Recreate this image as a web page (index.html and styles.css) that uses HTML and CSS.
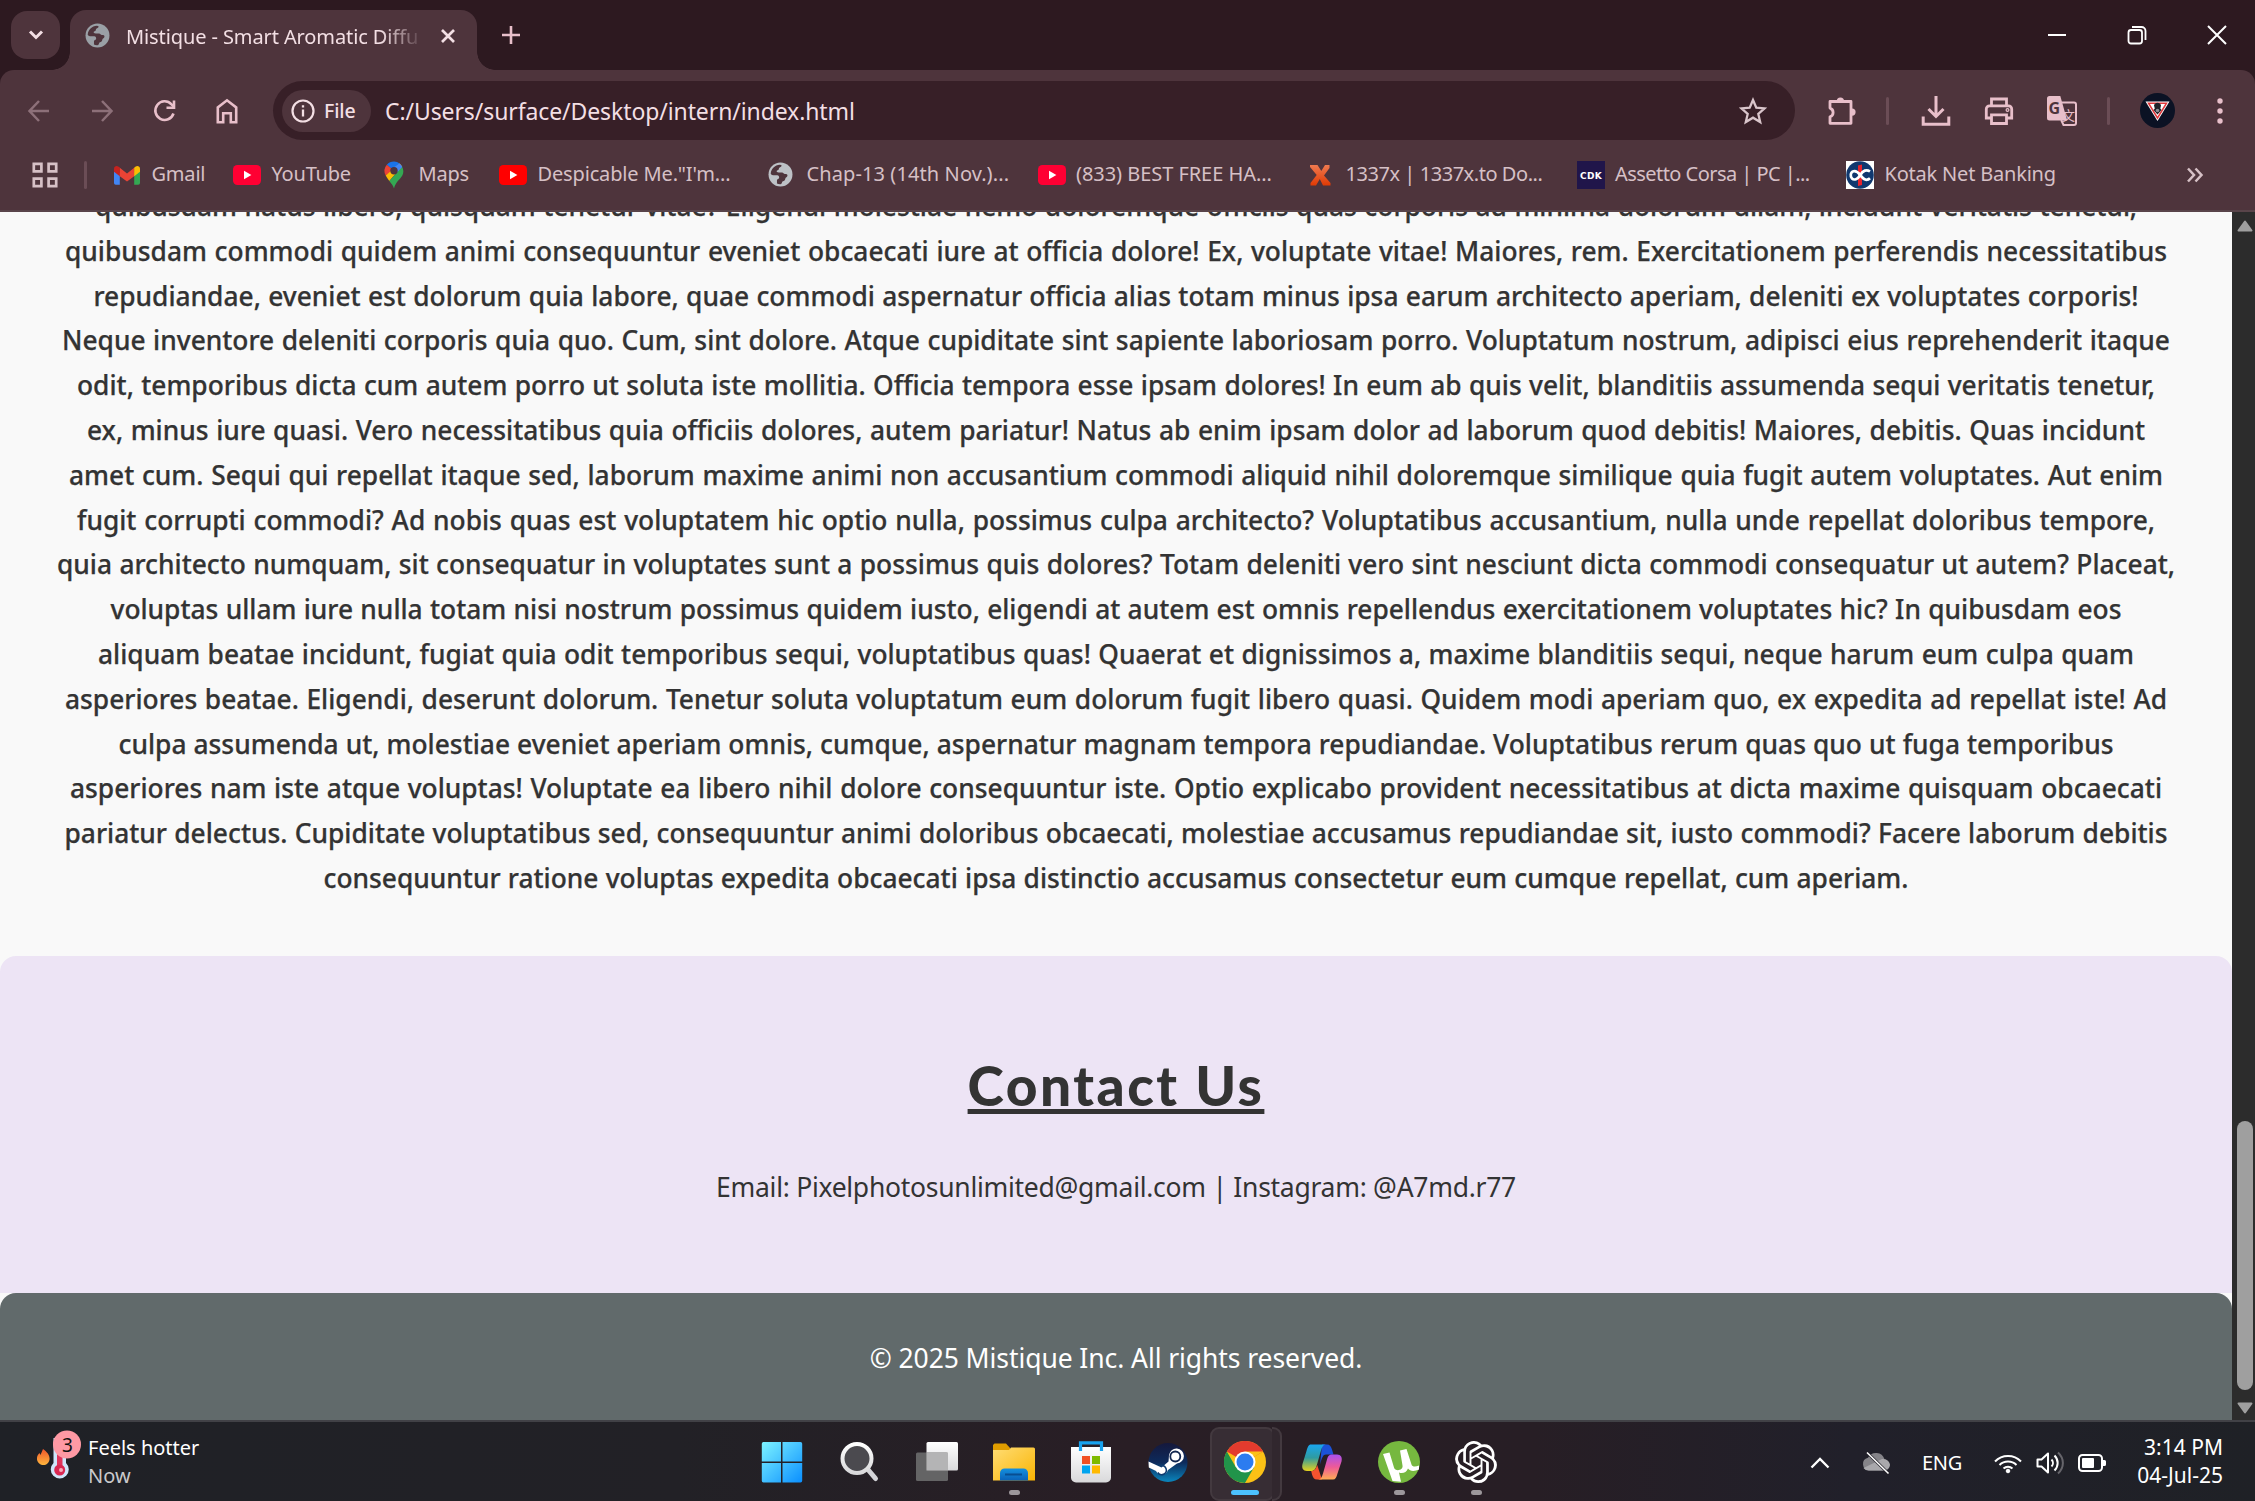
FILE: index.html
```
<!DOCTYPE html>
<html lang="en">
<head>
<meta charset="utf-8">
<title>Mistique - Smart Aromatic Diffuser</title>
<link rel="stylesheet" href="styles.css">
</head>
<body>
<svg class="defs" width="0" height="0" aria-hidden="true">
  <defs>
    <linearGradient id="win" x1="0" y1="0" x2="1" y2="1"><stop offset="0" stop-color="#7df3ff"/><stop offset="1" stop-color="#0a8fff"/></linearGradient>
    <linearGradient id="folder" x1="0" y1="0" x2="1" y2="1"><stop offset="0" stop-color="#ffdd74"/><stop offset="1" stop-color="#f9b404"/></linearGradient>
    <linearGradient id="tray" x1="0" y1="0" x2="0" y2="1"><stop offset="0" stop-color="#1490df"/><stop offset="1" stop-color="#0a62b8"/></linearGradient>
    <linearGradient id="steam" x1="0" y1="0" x2="0" y2="1"><stop offset="0" stop-color="#15183c"/><stop offset=".5" stop-color="#0d2b5c"/><stop offset="1" stop-color="#0a86bd"/></linearGradient>
    <linearGradient id="copA" x1="0" y1="0" x2="0" y2="1"><stop offset="0" stop-color="#1aa6f0"/><stop offset=".5" stop-color="#2f9ba0"/><stop offset="1" stop-color="#e6d21c"/></linearGradient>
    <linearGradient id="copB" x1="0" y1="0" x2="0" y2="1"><stop offset="0" stop-color="#a851f0"/><stop offset=".5" stop-color="#ee5a98"/><stop offset="1" stop-color="#ffac54"/></linearGradient>
    <linearGradient id="metal" x1="0" y1="0" x2="0" y2="1"><stop offset="0" stop-color="#fff"/><stop offset="1" stop-color="#d9d9db"/></linearGradient>
    <linearGradient id="flame" x1="0" y1="0" x2="0" y2="1"><stop offset="0" stop-color="#f0552b"/><stop offset="1" stop-color="#ffb63d"/></linearGradient>
    <linearGradient id="xg" x1="0" y1="0" x2="0" y2="1"><stop offset="0" stop-color="#ef7a50"/><stop offset="1" stop-color="#e03a04"/></linearGradient>
    <symbol id="globe" viewBox="0 0 24 24"><circle cx="12" cy="12" r="11.5" fill="currentColor"/><path class="cut" d="M2.6 11.2C3 6.600 6.500 3 11.400 2.700c1.500 0 2.100.8 1.300 1.700-.9.9-2.300 1-2.300 2.200 0 1.100-1.500.9-2 1.900-.4.900.5 1.500 1.900 1.500h3.200c1.300 0 1.400 1.300 2.700 1.400 1.600.1 2.500.1 2.500 1.600 0 1.800-1.900 1.700-2.100 3.100-.2 1.700-1 1.900-2.300 2.400-1.100.4-.6 2.600-2.300 2.900-1.300.1-2.400-.2-3.400-.7v-2.900c0-1.500 2.100-1.100 2.100-3.100 0-1.700-1.500-1.900-2.800-1.900-1.900 0-4.600-.1-5.300-1.600z"/></symbol>
    <symbol id="youtube" viewBox="0 0 28 20"><rect width="28" height="20" rx="4.500" fill="currentColor"/><path d="M11 5.800v8.400l7.400-4.200z" fill="#fff"/></symbol>
  </defs>
</svg>

<header class="browser">
  <div class="tabstrip">
    <button class="tab-search"><svg width="18" height="12" viewBox="0 0 18 12"><path d="M3 2.500l6 6 6-6" fill="none" stroke="#f3dfe4" stroke-width="3"/></svg></button>
    <div class="tab">
      <svg class="globe" width="25" height="25"><use href="#globe"/></svg>
      <span class="tab-title">Mistique - Smart Aromatic Diffu</span>
      <svg width="16" height="16" viewBox="0 0 16 16"><path d="M2 2l12 12M14 2L2 14" stroke="#f3dfe4" stroke-width="2.700"/></svg>
    </div>
    <svg class="new-tab" width="18" height="18" viewBox="0 0 18 18"><path d="M9 0v18M0 9h18" stroke="#e8bfca" stroke-width="2.600"/></svg>
    <div class="window-buttons">
      <svg width="20" height="20" viewBox="0 0 20 20"><path d="M1 10h18" stroke="#fff" stroke-width="2"/></svg>
      <svg width="20" height="20" viewBox="0 0 20 20" fill="none" stroke="#fff" stroke-width="1.800"><rect x="1.500" y="5" width="13.500" height="13.500" rx="2.500"/><path d="M5 2h9.500a4 4 0 0 1 4 4v9"/></svg>
      <svg width="20" height="20" viewBox="0 0 20 20"><path d="M1 1l18 18M19 1L1 19" stroke="#fff" stroke-width="2"/></svg>
    </div>
  </div>

  <div class="toolbar">
    <div class="nav">
      <svg width="24" height="24" viewBox="0 0 24 24" fill="none" stroke="#8d7079" stroke-width="2.500"><path d="M22 12H3M12 2L2.500 12l9.500 10"/></svg>
      <svg width="24" height="24" viewBox="0 0 24 24" fill="none" stroke="#8d7079" stroke-width="2.500"><path d="M2 12h19M12 2l9.500 10L12 22"/></svg>
      <svg width="24" height="24" viewBox="0 0 24 24" fill="none" stroke="#e8bfca" stroke-width="2.600"><path d="M21.500 14.500a9.300 9.300 0 1 1-2-9.200l2 2.200"/><path d="M22 1.500v7.200h-7.500"/></svg>
      <svg width="24" height="26" viewBox="0 0 24 26" fill="none" stroke="#e8bfca" stroke-width="2.600"><path d="M2.800 24.300V9.500L12 2.300l9.200 7.200v14.800h-5.400v-9H8.200v9z"/></svg>
    </div>
    <div class="omnibox">
      <div class="chip">
        <svg width="24" height="24" viewBox="0 0 24 24"><circle cx="12" cy="12" r="10.500" fill="none" stroke="#f3dfe4" stroke-width="2.200"/><path d="M12 10.500v7M12 6.200v2.400" stroke="#f3dfe4" stroke-width="2.300"/></svg>
        <span>File</span>
      </div>
      <span class="url">C:/Users/surface/Desktop/intern/index.html</span>
      <svg class="star" width="28" height="28" viewBox="0 0 28 28"><path d="M14 3l3.300 7.700 8.300.7-6.300 5.500 1.900 8.200L14 20.700l-7.200 4.400 1.900-8.200-6.300-5.500 8.300-.7z" fill="none" stroke="#d9c5cb" stroke-width="2.300"/></svg>
    </div>
    <div class="actions">
      <svg width="30" height="30" viewBox="0 0 30 30"><path d="M3 5.500h21v21.800H3v-6.500a4.600 4.600 0 0 0 0-8.700z" fill="none" stroke="#e8bfca" stroke-width="2.800" stroke-linejoin="round"/><path d="M9.800 5a3.600 3.600 0 0 1 7.200 0zM25 12.500a3.600 3.600 0 0 1 0 7.200z" fill="#e8bfca"/></svg>
      <i class="divider"></i>
      <svg width="30" height="30" viewBox="0 0 30 30" fill="none" stroke="#e8bfca" stroke-width="3"><path d="M15 0v20M7.500 13l7.500 7.500 7.500-7.500M2.200 20.500v7.700h25.600v-7.700"/></svg>
      <svg width="30" height="30" viewBox="0 0 30 30" fill="none" stroke="#e8bfca" stroke-width="2.800"><path d="M7.500 9.500V3h15v6.500M7.500 22H2.300V13a3.200 3.200 0 0 1 3.200-3.200h19A3.200 3.200 0 0 1 27.700 13v9h-5.200"/><path d="M7.500 18.800h15v8.700h-15z"/><circle cx="23.500" cy="14" r=".6"/></svg>
      <svg width="30" height="30" viewBox="0 0 30 30"><path d="M2.500 0h10.800l6.900 24.500H2.500A2.500 2.500 0 0 1 0 22V2.500A2.500 2.500 0 0 1 2.500 0z" fill="#e8bfca"/><path d="M14.500 6.500H27a2 2 0 0 1 2 2V27a2 2 0 0 1-2 2H16.500l-2.300-5" fill="none" stroke="#e8bfca" stroke-width="2"/><text x="1.500" y="17.500" class="g-letter">G</text><text x="15" y="23.500" class="han">文</text></svg>
      <i class="divider last"></i>
      <svg class="avatar" width="35" height="35" viewBox="0 0 35 35"><circle cx="17.500" cy="17.500" r="17.500" fill="#0b1224"/><path d="M5.500 8.500h24L17.500 28z" fill="#fff"/><path d="M8.500 10.200h18L17.500 25z" fill="#fff" stroke="#e0393c" stroke-width="1.500"/><path d="M14 12.500a3.600 3.600 0 0 1 7 0l-.7 3 1.200 1.500-4 4.500-4-4.500 1.300-1.500z" fill="#202227"/><circle cx="17.500" cy="17.500" r="1.800" fill="#8b8d92"/></svg>
      <svg width="6" height="26" viewBox="0 0 6 26" fill="#e8bfca"><circle cx="3" cy="3" r="2.700"/><circle cx="3" cy="13" r="2.700"/><circle cx="3" cy="23" r="2.700"/></svg>
    </div>
  </div>

  <nav class="bookmarks">
    <svg class="apps" width="26" height="26" viewBox="0 0 26 26" fill="none" stroke="#d6c0c6" stroke-width="2.700"><path d="M1.800 1.800h7.600v7.600H1.800zM16.600 1.800h7.600v7.600h-7.600zM1.800 16.600h7.600v7.600H1.800zM16.600 16.600h7.600v7.600h-7.600z"/></svg>
    <i class="divider"></i>
    <a class="bm gmail"><svg width="28" height="28" viewBox="0 0 28 28"><path d="M1 8v14a1.800 1.800 0 0 0 1.800 1.800h4V12z" fill="#4285f4"/><path d="M27 8v14a1.800 1.800 0 0 1-1.800 1.800h-4V12z" fill="#34a853"/><path d="M6.500 6.500l7.500 6 7.500-6V15L14 20.500 6.500 15z" fill="#ea4335"/><path d="M21.200 6.800l1.500-1.200C24.500 4.200 27 5.500 27 7.700v3.100l-5.800 4.400z" fill="#fbbc04"/><path d="M6.800 6.800L5.300 5.600C3.500 4.200 1 5.500 1 7.700v3.100l5.800 4.400z" fill="#c5221f"/></svg><span>Gmail</span></a>
    <a class="bm yt"><svg class="yt-a" width="28" height="20"><use href="#youtube"/></svg><span>YouTube</span></a>
    <a class="bm maps"><svg width="28" height="28" viewBox="0 0 28 28"><path d="M14 .5a9.500 9.500 0 0 0-7.200 3.300l7.200 6L19.700 2.400A9.500 9.500 0 0 0 14 .5z" fill="#1a73e8"/><path d="M6.800 3.800A9.500 9.500 0 0 0 5.700 14.500L14 9.800z" fill="#ea4335"/><path d="M5.700 14.500c1 2 2.300 3.600 3.600 5.400L22 5.500a9.500 9.500 0 0 0-2.300-3.100z" fill="#fbbc04"/><path d="M22 5.500c1.800 3.200 1.700 6.300.3 9-2.600 4.500-6.500 6-8.300 13-.6-2.700-2.500-4.900-4.700-7.600z" fill="#34a853"/><path d="M19.700 2.400A9.500 9.500 0 0 1 22.300 6L16 12.500l-4-5z" fill="#4285f4"/><circle cx="14" cy="9.700" r="3.700" fill="#4e343c"/></svg><span>Maps</span></a>
    <a class="bm desp"><svg class="yt-b" width="28" height="20"><use href="#youtube"/></svg><span>Despicable Me."I'm...</span></a>
    <a class="bm chap"><svg class="globe light" width="25" height="25"><use href="#globe"/></svg><span>Chap-13 (14th Nov.)...</span></a>
    <a class="bm best"><svg class="yt-a" width="28" height="20"><use href="#youtube"/></svg><span>(833) BEST FREE HA...</span></a>
    <a class="bm leet"><svg width="28" height="28" viewBox="0 0 28 28"><path d="M3 4h7.500l3.800 6L18 4h4.500v3L17 14.500l6.500 7.500v2.500H16L12.800 18 9 24.500H3.500V22L9.700 14 3 6z" fill="url(#xg)"/></svg><span>1337x | 1337x.to Do...</span></a>
    <a class="bm asse"><svg width="28" height="28" viewBox="0 0 28 28"><rect width="28" height="28" fill="#20154a"/><text x="14" y="18" class="cdk">CDK</text></svg><span>Assetto Corsa | PC |...</span></a>
    <a class="bm kotak"><svg width="28" height="28" viewBox="0 0 28 28"><rect width="28" height="28" fill="#fff"/><circle cx="14" cy="14" r="13.800" fill="#10386f"/><path d="M12 4.500l4-1V24l-4 1z" fill="#e8232d"/><path d="M24 10.500C20.500 8 17 9.500 14.300 14S8 19.500 6 17.500s-1.700-6.500 1.500-7.300c3-.6 5 1.500 6.800 3.900s3.500 4.700 6 4.700c1.500 0 2.700-.5 3.700-1.500" fill="none" stroke="#fff" stroke-width="2.700"/></svg><span>Kotak Net Banking</span></a>
    <svg class="more" width="18" height="16" viewBox="0 0 18 16" fill="none" stroke="#d6c0c6" stroke-width="2.500"><path d="M2 1.500L8 8l-6 6.500M9.500 1.500L15.500 8l-6 6.500"/></svg>
  </nav>
</header>

<div class="viewport">
  <main class="page">
    <div class="about">
      <span style="width:2042px">quibusdam natus libero, quisquam tenetur vitae? Eligendi molestiae nemo doloremque officiis quas corporis ad minima dolorum ullam, incidunt veritatis tenetur,</span>
      <span style="width:2102px">quibusdam commodi quidem animi consequuntur eveniet obcaecati iure at officia dolore! Ex, voluptate vitae! Maiores, rem. Exercitationem perferendis necessitatibus</span>
      <span style="width:2045px">repudiandae, eveniet est dolorum quia labore, quae commodi aspernatur officia alias totam minus ipsa earum architecto aperiam, deleniti ex voluptates corporis!</span>
      <span style="width:2108px">Neque inventore deleniti corporis quia quo. Cum, sint dolore. Atque cupiditate sint sapiente laboriosam porro. Voluptatum nostrum, adipisci eius reprehenderit itaque</span>
      <span style="width:2078px">odit, temporibus dicta cum autem porro ut soluta iste mollitia. Officia tempora esse ipsam dolores! In eum ab quis velit, blanditiis assumenda sequi veritatis tenetur,</span>
      <span style="width:2058px">ex, minus iure quasi. Vero necessitatibus quia officiis dolores, autem pariatur! Natus ab enim ipsam dolor ad laborum quod debitis! Maiores, debitis. Quas incidunt</span>
      <span style="width:2094px">amet cum. Sequi qui repellat itaque sed, laborum maxime animi non accusantium commodi aliquid nihil doloremque similique quia fugit autem voluptates. Aut enim</span>
      <span style="width:2078px">fugit corrupti commodi? Ad nobis quas est voluptatem hic optio nulla, possimus culpa architecto? Voluptatibus accusantium, nulla unde repellat doloribus tempore,</span>
      <span style="width:2118px">quia architecto numquam, sit consequatur in voluptates sunt a possimus quis dolores? Totam deleniti vero sint nesciunt dicta commodi consequatur ut autem? Placeat,</span>
      <span style="width:2011px">voluptas ullam iure nulla totam nisi nostrum possimus quidem iusto, eligendi at autem est omnis repellendus exercitationem voluptates hic? In quibusdam eos</span>
      <span style="width:2036px">aliquam beatae incidunt, fugiat quia odit temporibus sequi, voluptatibus quas! Quaerat et dignissimos a, maxime blanditiis sequi, neque harum eum culpa quam</span>
      <span style="width:2102px">asperiores beatae. Eligendi, deserunt dolorum. Tenetur soluta voluptatum eum dolorum fugit libero quasi. Quidem modi aperiam quo, ex expedita ad repellat iste! Ad</span>
      <span style="width:1995px">culpa assumenda ut, molestiae eveniet aperiam omnis, cumque, aspernatur magnam tempora repudiandae. Voluptatibus rerum quas quo ut fuga temporibus</span>
      <span style="width:2092px">asperiores nam iste atque voluptas! Voluptate ea libero nihil dolore consequuntur iste. Optio explicabo provident necessitatibus at dicta maxime quisquam obcaecati</span>
      <span style="width:2103px">pariatur delectus. Cupiditate voluptatibus sed, consequuntur animi doloribus obcaecati, molestiae accusamus repudiandae sit, iusto commodi? Facere laborum debitis</span>
      <span style="width:1585px">consequuntur ratione voluptas expedita obcaecati ipsa distinctio accusamus consectetur eum cumque repellat, cum aperiam.</span>
    </div>
    <section class="contact">
      <h2>Contact Us</h2>
      <p>Email: Pixelphotosunlimited@gmail.com | Instagram: @A7md.r77</p>
    </section>
    <footer class="footer">© 2025 Mistique Inc. All rights reserved.</footer>
  </main>
  <div class="scrollbar">
    <svg width="16" height="12" viewBox="0 0 16 12"><path d="M8 1.500L14.500 10.500H1.500z" fill="#9f9f9f" stroke="#9f9f9f" stroke-width="2" stroke-linejoin="round"/></svg>
    <div class="thumb"></div>
    <svg width="16" height="12" viewBox="0 0 16 12"><path d="M8 10.500L14.500 1.500H1.500z" fill="#9f9f9f" stroke="#9f9f9f" stroke-width="2" stroke-linejoin="round"/></svg>
  </div>
</div>

<div class="taskbar">
  <div class="weather">
    <svg width="44" height="52" viewBox="0 0 44 52"><path d="M6 19c4 3 7 6 6.500 10.500C12 33 9.500 35 6.500 35S.5 33 0 29.500c-.3-3 1-5 2.500-6.500l1 2C4.500 23 5 21 6 19z" fill="url(#flame)"/><path d="M16.500 8h12.500v25a9 9 0 1 1-12.500 0z" fill="#cfe6fb"/><path d="M20 10h5.500v26H20z" fill="#e0355c"/><circle cx="22.700" cy="40" r="5.500" fill="#d92852"/><circle cx="24" cy="40" r="2" fill="#f9a9ba"/><circle cx="30" cy="14.500" r="14" fill="#ff99a4"/><text x="30.500" y="21.500" class="badge">3</text></svg>
    <div class="weather-text"><span class="hot">Feels hotter</span><span class="now">Now</span></div>
  </div>
  <div class="apps-row">
    <div class="app start"><svg width="42" height="42" viewBox="0 0 42 42"><path d="M2.500 1H20v19.500H.8V2.700A1.700 1.700 0 0 1 2.500 1zM21.500 1h18a1.700 1.700 0 0 1 1.700 1.700v17.800H21.500zM.8 22H20v19.500H2.500a1.700 1.700 0 0 1-1.700-1.700zM21.500 22h19.700v17.800a1.700 1.700 0 0 1-1.700 1.700h-18z" fill="url(#win)"/></svg></div>
    <div class="app"><svg width="42" height="42" viewBox="0 0 42 42"><path d="M28.500 28l8 9.500" stroke="#d5d5d9" stroke-width="5" stroke-linecap="round"/><circle cx="18" cy="17.500" r="14.500" fill="#4b4a4f" stroke="url(#metal)" stroke-width="4"/></svg></div>
    <div class="app"><svg width="42" height="42" viewBox="0 0 42 42"><rect x="10.500" y="1" width="31.500" height="28.500" rx="1.500" fill="url(#metal)"/><rect y="11.500" width="32" height="28.500" rx="1.500" fill="#6b6b6d" opacity=".9"/><path d="M10.500 11.500H32v18H10.500z" fill="#b4b4b5"/></svg></div>
    <div class="app"><svg width="42" height="42" viewBox="0 0 42 42"><path d="M1.500 2.500H13l4 4.500v3H0V4z" fill="#e09d00"/><path d="M0 9h16l2-2.500h22.500A1.500 1.500 0 0 1 42 8v31.500H0z" fill="url(#folder)"/><path d="M7 39.500V32a4.500 4.500 0 0 1 4.500-4.500h19A4.500 4.500 0 0 1 35 32v7.500z" fill="url(#tray)"/><path d="M12 33.500h17" stroke="#084e91" stroke-width="2"/></svg><i class="dot"></i></div>
    <div class="app"><svg width="42" height="42" viewBox="0 0 42 42"><path d="M1 6h40v30.500a5 5 0 0 1-5 5H6a5 5 0 0 1-5-5z" fill="url(#metal)"/><path d="M10.500 10V1.800h21V10" fill="none" stroke="#18a2ee" stroke-width="3.200"/><path d="M12 15h8v8h-8z" fill="#f25022"/><path d="M22 15h8v8h-8z" fill="#7fba00"/><path d="M12 24.500h8v8h-8z" fill="#00a4ef"/><path d="M22 24.500h8v8h-8z" fill="#ffb900"/></svg></div>
    <div class="app"><svg width="42" height="42" viewBox="0 0 42 42"><circle cx="21" cy="21.500" r="19.500" fill="url(#steam)"/><path d="M1.500 20.500l13 6 7-6 .5-6.500a7.500 7.500 0 1 1 8 8.500l-9 6.500a6.500 6.500 0 0 1-12 1L1.800 26.500z" fill="#fff"/><circle cx="28.300" cy="15.500" r="5" fill="#fff" stroke="#12264f" stroke-width="1.800"/><path d="M14 24.500a4.600 4.600 0 1 1-3.200 7" fill="none" stroke="#0e3c71" stroke-width="1.500"/></svg></div>
    <div class="app active"><svg width="42" height="42" viewBox="0 0 42 42"><circle cx="21" cy="21" r="21" fill="#fbc116"/><path d="M21 21L2.800 10.500A21 21 0 0 1 39.200 10.500z" fill="#e33b2e"/><path d="M21 10.500h18.200L30 16z" fill="#fbc116"/><path d="M2.800 10.500A21 21 0 0 0 21 42l9.100-15.700L21 21 11.900 26.300z" fill="#21944a"/><circle cx="21" cy="21" r="10.500" fill="#fff"/><circle cx="21" cy="21" r="8.500" fill="#2c7cf0"/></svg><i class="dot wide"></i></div>
    <div class="app"><svg width="42" height="42" viewBox="0 0 42 42"><path d="M21 3.500h5c3 0 4 2 5 5l1.500 5H25c-3 0-4 3-6 10z" fill="#1b52d8"/><path d="M10 3.500h15c-3 0-4 3-5 6l-4 14c-1.500 5-3 6.500-6 6.500H6c-4 0-5.500-3-4.500-7l4-13c1.200-4 2-6.500 4.500-6.500z" fill="url(#copA)"/><path d="M21 38.500h-5c-3 0-4-2-5-5l-.8-3.500c3 0 4.500-1.500 6-6z" fill="#f4532f"/><path d="M32 38.500H17c3 0 4-3 5-6l4-14c1.500-5 3-5 6-5h4c4 0 5.500 3 4.500 7l-4 12c-1.200 4-2 6-4.500 6z" fill="url(#copB)"/></svg></div>
    <div class="app"><svg width="42" height="42" viewBox="0 0 42 42"><circle cx="21" cy="21" r="21" fill="#76b83f"/><path d="M5 13l6.500-1.500 4.500 15c1.200 4.500 9.500 3 8.500-2L22 9.500l6.500-1.500 5 15.500c.8 2.500 4 2.500 7.500 1v4c-4.500 2-9 2-11-1-1.500 4-5.500 5.500-9 4L23 40.800 14.500 40z" fill="#fff"/></svg><i class="dot"></i></div>
    <div class="app"><svg width="42" height="42" viewBox="0 0 24 24"><path fill="#fff" d="M22.282 9.821a5.985 5.985 0 0 0-.516-4.911 6.046 6.046 0 0 0-6.510-2.900A6.065 6.065 0 0 0 4.981 4.182a5.985 5.985 0 0 0-3.998 2.900 6.046 6.046 0 0 0 .743 7.097 5.980 5.980 0 0 0 .511 4.911 6.051 6.051 0 0 0 6.515 2.900A5.985 5.985 0 0 0 13.260 24a6.056 6.056 0 0 0 5.772-4.206 5.989 5.989 0 0 0 3.998-2.900 6.056 6.056 0 0 0-.748-7.073zm-9.022 12.608a4.476 4.476 0 0 1-2.876-1.041l.142-.080 4.778-2.758a.795.795 0 0 0 .393-.681v-6.737l2.020 1.169a.071.071 0 0 1 .038.052v5.583a4.504 4.504 0 0 1-4.495 4.494zm-9.661-4.125a4.471 4.471 0 0 1-.535-3.014l.142.085 4.783 2.758a.771.771 0 0 0 .781 0l5.843-3.369v2.332a.080.080 0 0 1-.033.062L9.740 19.950a4.499 4.499 0 0 1-6.141-1.646zM2.341 7.896a4.485 4.485 0 0 1 2.366-1.973V11.600a.766.766 0 0 0 .388.677l5.814 3.354-2.020 1.169a.076.076 0 0 1-.071 0l-4.830-2.787A4.504 4.504 0 0 1 2.341 7.872zm16.596 3.856L13.104 8.364 15.119 7.200a.076.076 0 0 1 .071 0l4.830 2.791a4.494 4.494 0 0 1-.677 8.104v-5.677a.790.790 0 0 0-.407-.667zm2.011-3.023l-.142-.085-4.774-2.782a.776.776 0 0 0-.785 0L9.409 9.230V6.897a.066.066 0 0 1 .028-.062l4.830-2.787a4.499 4.499 0 0 1 6.680 4.660zM8.307 12.863l-2.020-1.164a.080.080 0 0 1-.038-.057V6.074a4.499 4.499 0 0 1 7.376-3.454l-.142.081L8.704 5.459a.795.795 0 0 0-.393.681zm1.098-2.365l2.602-1.500 2.607 1.500v2.999l-2.597 1.500-2.607-1.500z"/></svg><i class="dot"></i></div>
  </div>
  <div class="systray">
    <svg width="20" height="12" viewBox="0 0 20 12"><path d="M1.500 10.500L10 2l8.500 8.500" fill="none" stroke="#fff" stroke-width="2.300"/></svg>
    <svg class="cloud" width="28" height="24" viewBox="0 0 28 24"><path d="M7 19.500a6.500 6.500 0 0 1-1-12.800 9 9 0 0 1 16.500 1.500 5.800 5.800 0 0 1-.5 11.300z" fill="#858489"/><path d="M1.500 17L20 8c5-.5 8 3 8 6a5.800 5.800 0 0 1-6 5.500H7a6.500 6.500 0 0 1-5.500-2.500z" fill="#a9a8ac"/><path d="M5 1.500l21.500 21" stroke="#24222a" stroke-width="3"/><path d="M5 1.500l21.500 21" stroke="#fff" stroke-width="1.600"/></svg>
    <span class="lang">ENG</span>
    <svg class="wifi" width="28" height="22" viewBox="0 0 28 22" fill="none" stroke="#fff" stroke-width="2"><path d="M1 9.500a18 18 0 0 1 26 0M5.500 13a12.300 12.300 0 0 1 17 0M9.500 16.500a7 7 0 0 1 9 0"/><circle cx="14" cy="19" r="1.800" fill="#fff" stroke-width="1"/></svg>
    <svg class="vol" width="28" height="24" viewBox="0 0 28 24" fill="none" stroke="#fff" stroke-width="2"><path d="M1.500 8.500h4L12 2.500v19l-6.500-6h-4z" stroke-linejoin="round"/><path d="M15.500 8.500a5 5 0 0 1 0 7M18.500 4.500a10.500 10.500 0 0 1 0 15"/><path d="M22 1.500c6.500 6 6.500 15 0 21" stroke="#66656b"/></svg>
    <svg class="bat" width="28" height="18" viewBox="0 0 28 18"><rect x="1" y="1" width="23" height="16" rx="3.500" fill="none" stroke="#fff" stroke-width="2"/><rect x="4" y="4" width="12" height="10" rx="1" fill="#fff"/><path d="M25 6h1.500a1.500 1.500 0 0 1 1.500 1.500v3a1.500 1.500 0 0 1-1.500 1.500H25z" fill="#fff"/></svg>
    <div class="clock"><span>3:14 PM</span><span>04-Jul-25</span></div>
  </div>
</div>
</body>
</html>
```
FILE: styles.css
```
* { box-sizing: border-box; }

body {
  margin: 0;
  width: 2255px;
  height: 1501px;
  display: flex;
  flex-direction: column;
  overflow: hidden;
  font-family: "Noto Sans", "Noto Sans CJK SC", sans-serif;
}

svg { display: block; flex: none; }
.defs { position: absolute; }

/* Browser chrome */
.browser {
  flex: none;
  height: 212px;
  background: #2d1920;
  display: flex;
  flex-direction: column;
}

.tabstrip {
  height: 70px;
  flex: none;
  display: flex;
  align-items: flex-end;
  padding-left: 11px;
}

.tab-search {
  width: 49px;
  height: 48px;
  margin-bottom: 11px;
  border: 0;
  padding: 0;
  border-radius: 16px;
  background: #4e343c;
  display: grid;
  place-items: center;
}

.tab {
  position: relative;
  margin-left: 10px;
  width: 407px;
  height: 60px;
  border-radius: 16px 16px 0 0;
  background: #4e343c;
  display: flex;
  align-items: center;
  padding: 0 21px 9px 15px;
}

.tab::before,
.tab::after {
  content: "";
  position: absolute;
  bottom: 0;
  width: 18px;
  height: 18px;
}
.tab::before { left: -18px; background: radial-gradient(circle at 0 0, transparent 17.5px, #4e343c 18px); }
.tab::after { right: -18px; background: radial-gradient(circle at 100% 0, transparent 17.5px, #4e343c 18px); }

.globe { color: #9aa0a6; }
.globe.light { color: #bdc1c6; }
.cut { fill: #4e343c; }

.tab-title {
  margin: 2px auto 0 16px;
  width: 294px;
  white-space: nowrap;
  font-size: 20px;
  letter-spacing: -0.1px;
  color: #f3dfe4;
  -webkit-mask-image: linear-gradient(90deg, #000 255px, transparent 298px);
  mask-image: linear-gradient(90deg, #000 255px, transparent 298px);
}

.new-tab { margin: 0 0 26px 25px; }

.window-buttons {
  margin: 0 28px 25px auto;
  display: flex;
  gap: 60px;
}

.toolbar {
  height: 81px;
  flex: none;
  background: #4e343c;
  border-radius: 14px 14px 0 0;
  display: flex;
  align-items: center;
  padding-left: 27px;
}

.nav { display: flex; align-items: center; gap: 38.7px; width: 213px; }

.omnibox {
  margin-left: 33px;
  width: 1522px;
  height: 59px;
  border-radius: 30px;
  background: #371f27;
  display: flex;
  align-items: center;
  padding: 0 28px 0 9px;
}

.chip {
  width: 89px;
  height: 42px;
  border-radius: 21px;
  background: #4e343c;
  display: flex;
  align-items: center;
  gap: 9px;
  padding-left: 9px;
  font-size: 19.5px;
  font-weight: 500;
  letter-spacing: -0.1px;
  color: #f3dfe4;
}

.url {
  margin-left: 14px;
  font-size: 23px;
  letter-spacing: -0.1px;
  color: #f3dfe4;
}
.star { margin-left: auto; }

.actions { display: flex; align-items: center; margin-left: 32px; }
.divider { width: 3px; height: 28px; border-radius: 2px; background: #6b4d56; }
.actions .divider { margin: 0 32px 0 29px; }
.actions .divider.last { margin-left: 30px; }
.actions svg + svg { margin-left: 33px; }
.actions svg.avatar { margin-left: -2px; }
.actions svg.avatar + svg { margin-left: 42px; }

.bookmarks {
  height: 61px;
  flex: none;
  background: #4e343c;
  border-bottom: 2px solid #59444a;
  display: flex;
  align-items: center;
  padding: 0 0 12px 32px;
}
.bookmarks .divider { margin: 0 26px 0 26px; }

.bm {
  display: flex;
  align-items: center;
  gap: 10.5px;
  width: 269.5px;
  flex: none;
  font-size: 20px;
  line-height: 26px;
  color: #d6c0c6;
  white-space: nowrap;
}
.bm span { margin-top: -1px; }
.bm .globe { margin-right: 3px; }
.yt-a { color: #ff0033; }
.yt-b { color: #ff0000; }
.gmail { width: 120px; }
.yt { width: 147px; }
.maps { width: 119px; }
.gmail, .yt, .maps { letter-spacing: -0.2px; }
.desp { letter-spacing: -0.15px; width: 269px; }
.chap { letter-spacing: 0.1px; }
.best { letter-spacing: -0.05px; }
.leet { letter-spacing: -0.45px; }
.asse { letter-spacing: -0.55px; }
.kotak { letter-spacing: -0.2px; width: 340px; }

.cdk {
  font: 700 9px "DejaVu Sans", sans-serif;
  fill: #fff;
  text-anchor: middle;
  letter-spacing: 0.4px;
}
.g-letter { font: 700 16px "Open Sans", sans-serif; fill: #4e343c; }
.han { font: 13px "Noto Sans CJK SC", sans-serif; fill: #e8bfca; }

/* Page */
.viewport { flex: none; height: 1208px; display: flex; }

.page {
  width: 2232px;
  height: 1208px;
  overflow: hidden;
  background: #f9f9f9;
  color: #333;
}

.about {
  height: 744px;
  display: flex;
  flex-direction: column;
  align-items: center;
}
.about span {
  display: block;
  flex: none;
  font-size: 26.35px;
  font-weight: 500;
  line-height: 44.8px;
  text-align: justify;
  text-align-last: justify;
  -webkit-text-stroke: 0.25px #333;
}
.about span:first-child { margin-top: -28px; }

.contact {
  height: 337px;
  padding-top: 95px;
  border-radius: 16px 16px 0 0;
  background: #ede4f5;
  text-align: center;
}
.contact h2 {
  margin: 0;
  font: 900 55px/68px Lato, sans-serif;
  letter-spacing: 2.5px;
  text-decoration: underline;
  text-decoration-thickness: 5px;
  text-underline-offset: 3px;
  text-decoration-skip-ink: none;
}
.contact p {
  margin: 46px 0 0;
  font-size: 26.5px;
  line-height: 45px;
  letter-spacing: -0.28px;
}

.footer {
  height: 127px;
  border-radius: 16px 16px 0 0;
  background: #616a6b;
  color: #fff;
  text-align: center;
  font-size: 26.5px;
  line-height: 131px;
  letter-spacing: -0.08px;
}

.scrollbar {
  width: 23px;
  background: #2c2c2c;
  display: flex;
  flex-direction: column;
  align-items: center;
  padding: 8px 0 6px 3px;
}
.thumb {
  width: 16px;
  height: 269px;
  margin: auto 0 12px;
  border-radius: 8px;
  background: #9f9f9f;
}

/* Taskbar */
.taskbar {
  flex: 1;
  border-top: 2px solid #414146;
  background: linear-gradient(90deg, #1f2126 0, #222126 30%, #291e25 50%, #271e25 68%, #21202a 82%, #1f2126 100%);
  display: grid;
  grid-template-columns: 751px 1fr auto;
  color: #fff;
}

.weather { display: flex; padding: 8px 0 0 37px; gap: 7px; }
.weather-text { display: flex; flex-direction: column; padding-top: 4px; font-size: 20px; line-height: 28px; }
.now { color: #c9c9cb; }
.badge { font-size: 19px; fill: #111; text-anchor: middle; }

.apps-row { display: flex; gap: 16px; padding-top: 5px; }
.app {
  position: relative;
  width: 61px;
  height: 70px;
  display: flex;
  justify-content: center;
  align-items: flex-start;
  padding-top: 14px;
}
.app.start { margin-right: 1.5px; }
.app svg { position: relative; }
.active::before,
.active::after {
  content: "";
  position: absolute;
  top: 0;
  height: 70px;
  border: 2px solid #43393f;
}
.active::before { left: -5px; width: 61px; border-radius: 9px; background: #372d34; }
.active::after { left: 57px; width: 8px; border-left: 0; border-radius: 0 9px 9px 0; background: #31272e; }
.dot {
  position: absolute;
  bottom: 2px;
  left: calc(50% - 5.5px);
  width: 11px;
  height: 5px;
  border-radius: 3px;
  background: #9c979b;
}
.dot.wide { width: 28px; left: calc(50% - 14px); background: #4cc2ff; z-index: 1; }

.systray { display: flex; align-items: center; padding: 2px 32px 0 0; }
.cloud { margin-left: 32px; }
.lang { margin-left: 32px; font-size: 20px; letter-spacing: -0.3px; }
.wifi { margin-left: 32px; }
.vol { margin-left: 14px; }
.bat { margin-left: 14px; }
.clock {
  margin-left: 29px;
  width: 88px;
  display: flex;
  flex-direction: column;
  align-items: flex-end;
  margin-top: -3px;
  font-size: 21px;
  line-height: 28px;
  white-space: nowrap;
}
```
